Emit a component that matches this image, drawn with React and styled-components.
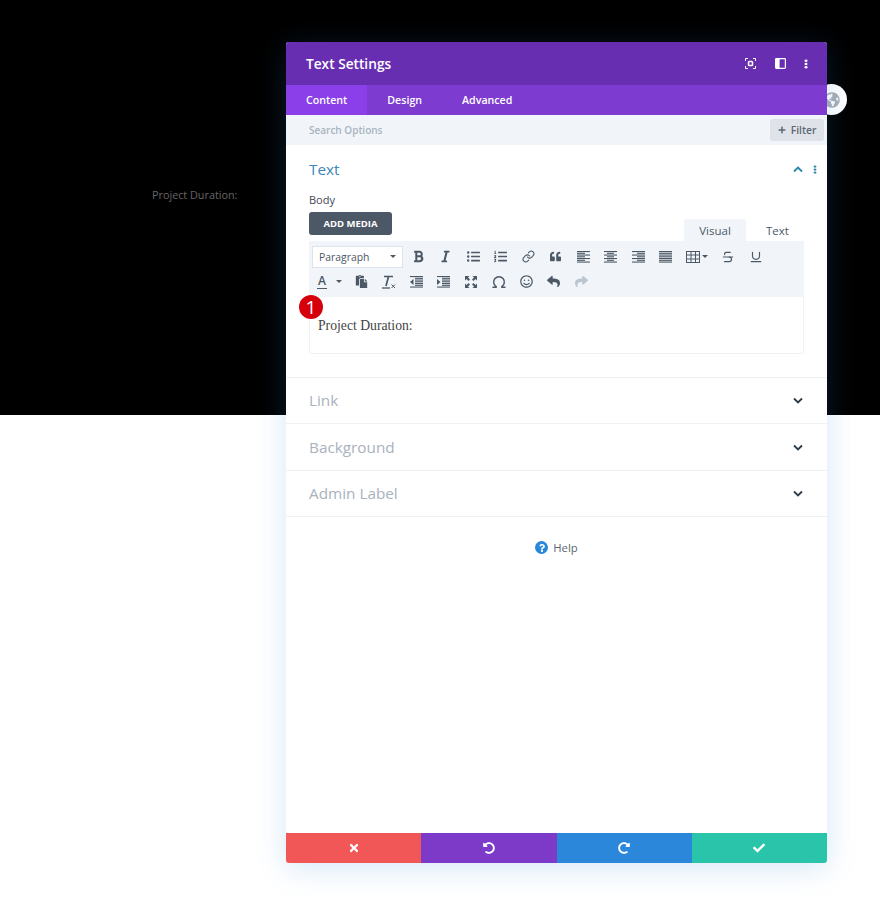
import React from "react";
import styled, { createGlobalStyle } from "styled-components";
import {
  FaBold, FaItalic, FaListUl, FaListOl, FaQuoteLeft, FaPaste,
  FaRegSmile, FaReply, FaShare, FaGlobeAmericas, FaTimes, FaUndoAlt, FaRedoAlt, FaCheck, FaPlus,
  FaQuestion,
} from "react-icons/fa";
import { Omega, Link as LinkIcon, Strikethrough, Underline } from "lucide-react";

const Global = createGlobalStyle`
  html, body { margin: 0; padding: 0; background: #fff; }
  * { box-sizing: border-box; }
  body { font-family: "Open Sans", "Liberation Sans", sans-serif; }
`;

const Page = styled.div`
  position: relative;
  width: 880px;
  height: 902px;
  overflow: hidden;
  background: #fff;
`;
const Hero = styled.section`
  height: 415px;
  background: #000;
  padding: 187px 0 0 152px;
`;
const HeroText = styled.p`
  margin: 0;
  font-size: 10.8px;
  line-height: 16px;
  color: #666;
`;
const GlobeBubble = styled.div`
  position: absolute;
  left: 816px;
  top: 84px;
  width: 31px;
  height: 31px;
  border-radius: 50%;
  background: #fff;
  color: #a9aeb5;
  display: flex;
  align-items: center;
  justify-content: center;
  font-size: 16px;
`;
const Modal = styled.div`
  position: absolute;
  left: 286px;
  top: 42px;
  width: 541px;
  height: 821px;
  display: flex;
  flex-direction: column;
  background: #fff;
  border-radius: 3px;
  box-shadow: 0 5px 30px rgba(43, 135, 218, 0.2);
  overflow: hidden;
`;
const Header = styled.header`
  height: 43px;
  flex: none;
  background: #672eb1;
  display: flex;
  align-items: center;
  padding: 0 19px 0 20px;
`;
const Title = styled.h1`
  margin: 0 0 1px;
  flex: 1;
  font-size: 13.7px;
  font-weight: 600;
  color: #fff;
`;
const HeaderIcons = styled.div`
  display: flex;
  align-items: center;
  gap: 18.5px;
  color: #fff;
`;
const Tabs = styled.nav`
  height: 30px;
  flex: none;
  background: #7d3bcf;
  display: flex;
`;
const Tab = styled.div`
  height: 30px;
  display: flex;
  align-items: center;
  padding: 0 20px 1px;
  font-size: 10.65px;
  font-weight: 600;
  color: #fff;
  background: ${(p) => (p.$active ? "#8a3fe8" : "transparent")};
`;
const SearchBar = styled.div`
  height: 30px;
  flex: none;
  background: #f1f5f9;
  display: flex;
  align-items: center;
  justify-content: space-between;
  padding: 0 3px 0 23px;
`;
const SearchText = styled.span`
  font-size: 10px;
  font-weight: 600;
  color: #a8b3bf;
`;
const FilterButton = styled.div`
  width: 54px;
  height: 22px;
  border-radius: 3px;
  background: #dfe3e9;
  color: #5b6775;
  display: flex;
  align-items: center;
  justify-content: center;
  gap: 5px;
  font-size: 10.3px;
  font-weight: 600;
`;
const OpenSection = styled.section`
  flex: none;
  height: 233px;
  padding: 14px 23px 0;
  border-bottom: 1px solid #eef1f5;
`;
const SectionHead = styled.div`
  height: 20px;
  display: flex;
  align-items: center;
  justify-content: space-between;
`;
const SectionTitle = styled.h2`
  margin: -1px 0 0;
  font-size: 15.3px;
  line-height: 20px;
  font-weight: 400;
  color: ${(p) => (p.$open ? "#3d86bd" : "#a9b2bd")};
`;
const HeadIcons = styled.div`
  display: flex;
  align-items: center;
  gap: 10px;
  color: #2b87a8;
  margin-right: -13px;
`;
const FieldLabel = styled.div`
  margin-top: 13px;
  font-size: 11px;
  line-height: 16px;
  font-weight: 500;
  color: #3f4753;
`;
const MediaRow = styled.div`
  margin-top: 4px;
  height: 29px;
  display: flex;
  justify-content: space-between;
`;
const MediaButton = styled.div`
  width: 83px;
  height: 23px;
  border-radius: 3px;
  background: #4c5866;
  color: #fff;
  font-size: 9.5px;
  font-weight: 700;
  display: flex;
  align-items: center;
  justify-content: center;
`;
const ModeTabs = styled.div`
  display: flex;
  align-items: flex-end;
  gap: 5px;
`;
const ModeTab = styled.div`
  width: ${(p) => p.$w}px;
  height: 22px;
  background: ${(p) => (p.$active ? "#f1f5f9" : "#fff")};
  border-radius: 2px 2px 0 0;
  font-size: 11.5px;
  color: #4c5866;
  display: flex;
  align-items: center;
  justify-content: center;
`;
const Toolbar = styled.div`
  height: 56px;
  background: #f1f5f9;
  padding: 3px 0 0 3px;
  display: flex;
  flex-direction: column;
`;
const ToolRow = styled.div`
  height: 25px;
  display: flex;
  align-items: center;
`;
const Select = styled.div`
  width: 91px;
  height: 22px;
  margin-right: 1.5px;
  background: #fff;
  border: 1px solid #dde3ea;
  display: flex;
  align-items: center;
  justify-content: space-between;
  padding: 0 6px;
  font-size: 10.4px;
  color: #4c5866;
`;
const Caret = styled.span`
  width: 0;
  height: 0;
  border-left: 3px solid transparent;
  border-right: 3px solid transparent;
  border-top: 3px solid #4c5866;
`;
const Tool = styled.div`
  width: 27.5px;
  height: 20px;
  flex: none;
  display: flex;
  align-items: center;
  justify-content: center;
  color: ${(p) => (p.$muted ? "#bcc5cf" : "#4c5866")};
  font-size: 13px;
`;
const ColorTool = styled.div`
  width: 35.5px;
  height: 20px;
  flex: none;
  display: flex;
  align-items: center;
  gap: 9px;
  padding-left: 5px;
  color: #4c5866;
`;
const ColorLetter = styled.span`
  font-size: 12px;
  line-height: 12px;
  font-weight: 600;
  border-bottom: 1.5px solid #4c5866;
  padding: 0 1px 1px;
`;
const TableTool = styled(Tool)`
  width: 35px;
  gap: 2px;
`;
const Editor = styled.div`
  position: relative;
  height: 57px;
  border: 1px solid #f0f2f5;
  border-top: 0;
  border-radius: 0 0 3px 3px;
  padding: 20px 8px 0;
  font-family: "Liberation Serif", serif;
  font-size: 13.7px;
  line-height: 18px;
  color: #444;
`;
const Badge = styled.div`
  position: absolute;
  left: -11px;
  top: -2px;
  width: 24px;
  height: 24px;
  border-radius: 50%;
  background: #d5000b;
  color: #fff;
  font-family: "Open Sans", sans-serif;
  font-size: 19px;
  font-weight: 500;
  display: flex;
  align-items: center;
  justify-content: center;
`;
const ClosedSection = styled.section`
  flex: none;
  height: ${(p) => p.$h}px;
  padding: 0 23px;
  display: flex;
  align-items: center;
  justify-content: space-between;
  border-bottom: 1px solid #eef1f5;
`;
const Chevron = styled.span`
  color: #2c3a4a;
  display: flex;
  margin-right: 1px;
`;
const HelpRow = styled.div`
  flex: 1;
  padding-top: 20px;
  display: flex;
  justify-content: center;
  gap: 5px;
  font-size: 11.3px;
  font-weight: 500;
  color: #5b6775;
`;
const HelpIcon = styled.span`
  width: 13px;
  height: 13px;
  margin-top: 4px;
  border-radius: 50%;
  background: #2b87da;
  color: #fff;
  display: flex;
  align-items: center;
  justify-content: center;
  font-size: 8px;
`;
const HelpText = styled.span`
  line-height: 21px;
`;
const Footer = styled.footer`
  height: 30px;
  flex: none;
  display: grid;
  grid-template-columns: repeat(4, 1fr);
`;
const FootButton = styled.div`
  background: ${(p) => p.$c};
  color: #fff;
  display: flex;
  align-items: center;
  justify-content: center;
  font-size: 12px;
`;

const Dots = ({ h = 10 }) => (
  <svg width="4" height={h} viewBox="0 0 4 12" fill="currentColor" preserveAspectRatio="none">
    <circle cx="2" cy="2" r="1.5" />
    <circle cx="2" cy="6" r="1.5" />
    <circle cx="2" cy="10" r="1.5" />
  </svg>
);
const FocusIcon = () => (
  <svg width="11" height="11" viewBox="0 0 11 11" fill="none" stroke="currentColor" strokeWidth="1">
    <path d="M.5 3V.5H3M8 .5h2.500V3M10.500 8v2.500H8M3 10.500H.5V8" />
    <rect x="3.500" y="3.500" width="4" height="4" rx=".8" strokeWidth="1.500" />
  </svg>
);
const SplitIcon = () => (
  <svg width="11" height="11" viewBox="0 0 11 11">
    <rect x=".6" y=".6" width="9.800" height="9.800" rx=".8" fill="none" stroke="currentColor" strokeWidth="1.200" />
    <rect x=".6" y=".6" width="4" height="9.800" fill="currentColor" />
  </svg>
);
const ChevronIcon = ({ up }) => (
  <svg width="10" height="7" viewBox="0 0 10 7" fill="none" stroke="currentColor" strokeWidth="1.800">
    <path d={up ? "M1 5.500 5 1.500l4 4" : "M1 1.500 5 5.500l4-4"} />
  </svg>
);
const TableIcon = () => (
  <svg width="14" height="12" viewBox="0 0 14 12" fill="none" stroke="currentColor" strokeWidth="1">
    <rect x=".5" y=".5" width="13" height="11" />
    <path d="M.5 4h13M.5 8h13M5 .5v11M9.500 .5v11" />
  </svg>
);
const ClearIcon = () => (
  <svg width="15" height="14" viewBox="0 0 15 14" fill="none" stroke="currentColor">
    <path d="M3 1.500h9M7.500 1.500 5 11" strokeWidth="1.700" />
    <path d="M1 13h8" strokeWidth="1.300" />
    <path d="m10.500 9.500 3.500 3.500m0-3.500L10.500 13" strokeWidth="1" />
  </svg>
);
const FullscreenIcon = () => (
  <svg width="14" height="14" viewBox="0 0 14 14" fill="currentColor">
    <path d="M1 1h4.500L4 2.500l2 2L4.500 6l-2-2L1 5.500zM13 1v4.500L11.500 4l-2 2L8 4.500l2-2L8.500 1zM1 13V8.500L2.500 10l2-2L6 9.500l-2 2L5.500 13zM13 13H8.500l1.500-1.500-2-2L9.500 8l2 2L13 8.500z" />
  </svg>
);
const alignPaths = {
  left: [13, 8, 13, 8, 13, 8, 13],
  center: [13, 7, 13, 7, 13, 7, 13],
  right: [13, 8, 13, 8, 13, 8, 13],
  justify: [13, 13, 13, 13, 13, 13, 13],
};
const AlignIcon = ({ kind }) => (
  <svg width="13" height="12" viewBox="0 0 13 12" fill="currentColor">
    {alignPaths[kind].map((w, i) => (
      <rect
        key={i}
        y={i * 1.75}
        x={kind === "left" ? 0 : kind === "right" ? 13 - w : (13 - w) / 2}
        width={w}
        height="1.100"
      />
    ))}
  </svg>
);
const IndentIcon = ({ out }) => (
  <svg width="13" height="12" viewBox="0 0 13 12" fill="currentColor">
    {[0, 1, 2, 3, 4, 5, 6].map((i) => (
      <rect key={i} y={i * 1.75} x={i === 0 || i === 6 ? 0 : 5} width={i === 0 || i === 6 ? 13 : 8} height="1.100" />
    ))}
    <path d={out ? "M3.500 3 0 6l3.500 3z" : "M0 3l3.500 3L0 9z"} />
  </svg>
);

const listIcons = [FaBold, FaItalic, FaListUl, FaListOl];

export default function App() {
  return (
    <Page>
      <Global />
      <Hero>
        <HeroText>Project Duration:</HeroText>
      </Hero>
      <GlobeBubble>
        <FaGlobeAmericas />
      </GlobeBubble>
      <Modal>
        <Header>
          <Title>Text Settings</Title>
          <HeaderIcons>
            <FocusIcon />
            <SplitIcon />
            <Dots />
          </HeaderIcons>
        </Header>
        <Tabs>
          <Tab $active>Content</Tab>
          <Tab>Design</Tab>
          <Tab>Advanced</Tab>
        </Tabs>
        <SearchBar>
          <SearchText>Search Options</SearchText>
          <FilterButton>
            <FaPlus size={8} />
            Filter
          </FilterButton>
        </SearchBar>
        <OpenSection>
          <SectionHead>
            <SectionTitle $open>Text</SectionTitle>
            <HeadIcons>
              <ChevronIcon up />
              <Dots h={9} />
            </HeadIcons>
          </SectionHead>
          <FieldLabel>Body</FieldLabel>
          <MediaRow>
            <MediaButton>ADD MEDIA</MediaButton>
            <ModeTabs>
              <ModeTab $w={62} $active>Visual</ModeTab>
              <ModeTab $w={53}>Text</ModeTab>
            </ModeTabs>
          </MediaRow>
          <Toolbar>
            <ToolRow>
              <Select>
                Paragraph
                <Caret />
              </Select>
              {listIcons.map((Icon, i) => (
                <Tool key={i}>
                  <Icon />
                </Tool>
              ))}
              <Tool><LinkIcon size={13} strokeWidth={2} /></Tool>
              <Tool><FaQuoteLeft size={11} /></Tool>
              <Tool><AlignIcon kind="left" /></Tool>
              <Tool><AlignIcon kind="center" /></Tool>
              <Tool><AlignIcon kind="right" /></Tool>
              <Tool><AlignIcon kind="justify" /></Tool>
              <TableTool>
                <TableIcon />
                <Caret />
              </TableTool>
              <Tool><Strikethrough size={14} strokeWidth={2} /></Tool>
              <Tool><Underline size={14} strokeWidth={2} /></Tool>
            </ToolRow>
            <ToolRow>
              <ColorTool>
                <ColorLetter>A</ColorLetter>
                <Caret />
              </ColorTool>
              <Tool><FaPaste /></Tool>
              <Tool><ClearIcon /></Tool>
              <Tool><IndentIcon out /></Tool>
              <Tool><IndentIcon /></Tool>
              <Tool><FullscreenIcon /></Tool>
              <Tool><Omega size={16} strokeWidth={2.2} /></Tool>
              <Tool><FaRegSmile /></Tool>
              <Tool><FaReply /></Tool>
              <Tool $muted><FaShare /></Tool>
            </ToolRow>
          </Toolbar>
          <Editor>
            <Badge>1</Badge>
            Project Duration:
          </Editor>
        </OpenSection>
        <ClosedSection $h={46}>
          <SectionTitle>Link</SectionTitle>
          <Chevron><ChevronIcon /></Chevron>
        </ClosedSection>
        <ClosedSection $h={47}>
          <SectionTitle>Background</SectionTitle>
          <Chevron><ChevronIcon /></Chevron>
        </ClosedSection>
        <ClosedSection $h={46}>
          <SectionTitle>Admin Label</SectionTitle>
          <Chevron><ChevronIcon /></Chevron>
        </ClosedSection>
        <HelpRow>
          <HelpIcon><FaQuestion /></HelpIcon>
          <HelpText>Help</HelpText>
        </HelpRow>
        <Footer>
          <FootButton $c="#f25757"><FaTimes /></FootButton>
          <FootButton $c="#7d3ac9"><FaUndoAlt /></FootButton>
          <FootButton $c="#2b87da"><FaRedoAlt /></FootButton>
          <FootButton $c="#29c4a9"><FaCheck /></FootButton>
        </Footer>
      </Modal>
    </Page>
  );
}
